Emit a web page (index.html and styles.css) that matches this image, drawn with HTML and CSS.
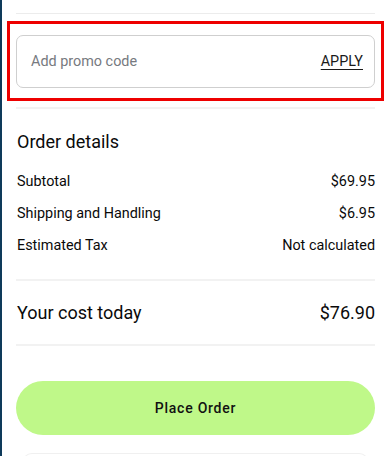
FILE: index.html
```html
<!DOCTYPE html>
<html lang="en">
<head>
<meta charset="utf-8">
<title>Order summary</title>
<link rel="stylesheet" href="styles.css">
</head>
<body>
<div class="page">
  <div class="content">
    <div class="sep sep-top"></div>
    <div class="highlight">
      <div class="promo">
        <span class="promo-placeholder">Add promo code</span>
        <span class="promo-apply">APPLY</span>
      </div>
    </div>
    <div class="sep sep-promo"></div>
    <h2 class="title">Order details</h2>
    <div class="rows">
      <div class="row"><span>Subtotal</span><span>$69.95</span></div>
      <div class="row"><span>Shipping and Handling</span><span>$6.95</span></div>
      <div class="row"><span>Estimated Tax</span><span>Not calculated</span></div>
    </div>
    <div class="sep sep-total"></div>
    <div class="total"><span>Your cost today</span><span>$76.90</span></div>
    <div class="sep"></div>
    <button class="place">Place Order</button>
    <div class="next-card"></div>
  </div>
</div>
</body>
</html>
```
FILE: styles.css
```css
html, body {
  margin: 0;
  padding: 0;
  background: #ffffff;
}
body {
  font-family: Roboto, "Liberation Sans", Arial, sans-serif;
  color: #111111;
}
.page {
  border-left: 2px solid #0e3a5a;
  height: 456px;
  box-sizing: border-box;
  overflow: hidden;
}
.content {
  padding: 13px 14px 0 14px;
  display: flex;
  flex-direction: column;
}
.sep {
  height: 2px;
  background: #f2f2f2;
}
.sep-top {
  height: 1px;
  background: #ececec;
}
.highlight {
  margin: 7px -9px 0 -9px;
  border: 3px solid #ee0000;
  padding: 11px 6px 10px 6px;
}
.promo {
  height: 53px;
  box-sizing: border-box;
  border: 1px solid #cfcfcf;
  border-radius: 7px;
  display: flex;
  align-items: center;
  justify-content: space-between;
  padding: 0 11px 0 14px;
  font-size: 14.4px;
}
.promo-placeholder {
  color: #777a80;
}
.promo-apply {
  color: #1a1a1a;
  text-decoration: underline;
  text-underline-offset: 3px;
}
.sep-promo {
  margin-top: 6px;
}
.title {
  margin: 21px 0 0 1px;
  font-size: 18px;
  font-weight: 400;
  line-height: 24px;
  color: #0a0a0a;
}
.rows {
  margin-top: 12px;
  display: flex;
  flex-direction: column;
}
.row {
  display: flex;
  justify-content: space-between;
  font-size: 14.4px;
  line-height: 32px;
  padding-left: 1px;
  color: #0a0a0a;
}
.sep-total {
  margin-top: 17px;
}
.total {
  display: flex;
  justify-content: space-between;
  font-size: 18px;
  line-height: 63px;
  padding-left: 1px;
  color: #0a0a0a;
}
.place {
  margin-top: 35px;
  height: 54px;
  flex-shrink: 0;
  border: none;
  border-radius: 27px;
  background: #bff889;
  font-family: Roboto, "Liberation Sans", Arial, sans-serif;
  font-size: 14px;
  font-weight: 500;
  letter-spacing: 0.75px;
  color: #111111;
}
.next-card {
  margin: 18px 6px 0 6px;
  height: 30px;
  flex-shrink: 0;
  border: 1px solid #f0f0f0;
  border-bottom: none;
  border-radius: 10px 10px 0 0;
}
```
